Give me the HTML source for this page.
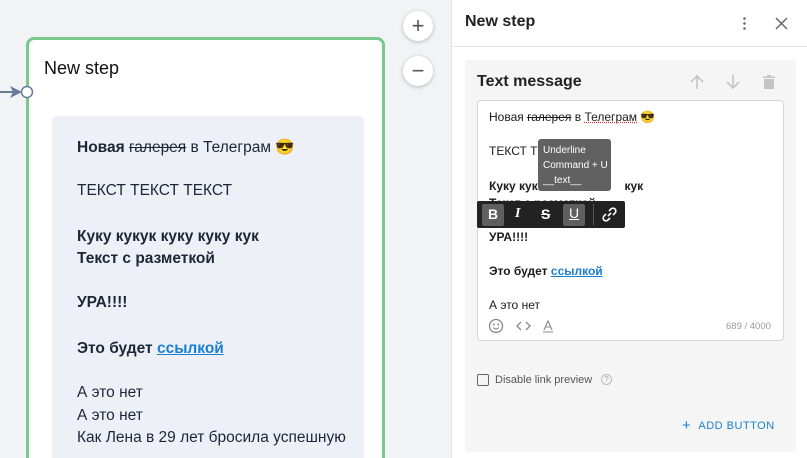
<!DOCTYPE html>
<html><head><meta charset="utf-8"><style>
*{margin:0;padding:0;box-sizing:border-box}
html,body{width:807px;height:458px;overflow:hidden}
body{background:#f2f3f5;font-family:"Liberation Sans",Arial,"Noto Sans CJK SC",sans-serif;position:relative;color:#1f2430}
.a{position:absolute;white-space:nowrap}
.card{position:absolute;left:26px;top:37px;width:359px;height:430px;border:3px solid #78c98b;border-radius:8px;background:#fff}
.inner{position:absolute;left:52px;top:116px;width:312px;height:342px;background:#edf1f7;border-radius:5px 5px 0 0}
.c{font-size:15.5px;color:#1f2633}
.b{font-weight:bold}
.lk{color:#1a7fd0;text-decoration:underline;font-weight:bold}
.zb{position:absolute;width:30px;height:30px;border-radius:50%;background:#fff;box-shadow:0 1px 4px rgba(0,0,0,.25);text-align:center;line-height:29px;font-size:22px;color:#555}
.panel{position:absolute;left:451px;top:0;width:356px;height:458px;background:#fff;border-left:1px solid #e3e3e3}
.e{font-size:12px;color:#1b1b1b}
</style></head><body>
<div class="zb" style="left:403px;top:11px">+</div>
<div class="zb" style="left:403px;top:56px">−</div>
<div class="card"></div>
<div class="a" style="left:44px;top:58px;font-size:18px;color:#111">New step</div>
<svg class="a" style="left:0;top:82px" width="36" height="20"><path d="M0 10H18" stroke="#6b7a96" stroke-width="2"/><path d="M10 4L22 10L10 16L13 10Z" fill="#6b7a96"/><circle cx="27" cy="10" r="5.5" fill="#fff" stroke="#6b7a96" stroke-width="1.5"/></svg>
<div class="inner"></div>
<div class="a c" style="left:77px;top:138px"><span class="b">Новая</span> <s>галерея</s> в Телеграм 😎</div>
<div class="a c" style="left:77px;top:182px">ТЕКСТ ТЕКСТ ТЕКСТ</div>
<div class="a c b" style="left:77px;top:228px">Куку кукук куку куку кук</div>
<div class="a c b" style="left:77px;top:250px">Текст с разметкой</div>
<div class="a c b" style="left:77px;top:294px">УРА!!!!</div>
<div class="a c b" style="left:77px;top:340px">Это будет <span class="lk">ссылкой</span></div>
<div class="a c" style="left:77px;top:384px">А это нет</div>
<div class="a c" style="left:77px;top:407px">А это нет</div>
<div class="a c" style="left:77px;top:429px">Как Лена в 29 лет бросила успешную</div>

<div class="panel">
<div style="height:47px;border-bottom:1px solid #e6e6e6"></div>
<div class="a" style="left:13px;top:13px;font-size:16px;font-weight:bold;color:#222">New step</div>
<div class="a" style="left:291px;top:16px;width:3px;height:15px;background:radial-gradient(circle,#777 1.2px,transparent 1.5px) 0 0/3px 5px"></div>
<svg class="a" style="left:323px;top:17px" width="13" height="13"><path d="M1 1L12 12M12 1L1 12" stroke="#666" stroke-width="1.5"/></svg>
<div class="a" style="left:13px;top:60px;width:331px;height:392px;background:#f5f5f5;border-radius:4px"></div>
<div class="a" style="left:25px;top:73px;font-size:16px;font-weight:bold;color:#222">Text message</div>
<svg class="a" style="left:237px;top:74px" width="110" height="16"><g stroke="#c4c4c4" stroke-width="1.6" fill="none"><path d="M8 15V2M2 8L8 2L14 8"/><path d="M44 1V14M38 8L44 14L50 8"/></g><path d="M74 2.5H86V4H74ZM78 1H82V2.5H78ZM75 5H85V15H75Z" fill="#c4c4c4"/></svg>
<div class="a" style="left:25px;top:100px;width:307px;height:241px;background:#fff;border:1px solid #d6d6d6;border-radius:4px"></div>
<div class="a e" style="left:37px;top:110px">Новая <s>галерея</s> в <span style="text-decoration:underline dotted #d33">Телеграм</span> 😎</div>
<div class="a e" style="left:37px;top:144px">ТЕКСТ Т</div>
<div class="a e b" style="left:37px;top:179px">Куку кук<span style="color:#fff">_____________</span>кук</div>
<div class="a e b" style="left:37px;top:196px">Текст с разметкой</div>
<div class="a e b" style="left:37px;top:230px">УРА!!!!</div>
<div class="a e b" style="left:37px;top:264px">Это будет <span class="lk">ссылкой</span></div>
<div class="a e" style="left:37px;top:298px">А это нет</div>
<div class="a" style="left:86px;top:139px;width:73px;height:52px;background:#616161;border-radius:3px;color:#fff;font-size:10px;line-height:15px;padding:4px 5px">Underline<br>Command + U<br>__text__</div>
<div class="a" style="left:25px;top:201px;width:148px;height:27px;background:#222;border-radius:2px"></div>
<div class="a" style="left:30px;top:204px;width:22px;height:22px;background:#5f5f5f;border-radius:2px"></div>
<div class="a" style="left:111px;top:204px;width:22px;height:22px;background:#5f5f5f;border-radius:2px"></div>
<div class="a" style="left:141px;top:204px;width:1px;height:21px;background:#555"></div>
<div class="a" style="left:36px;top:206px;color:#fff;font-weight:bold;font-size:14px">B</div>
<div class="a" style="left:63px;top:206px;color:#fff;font-weight:bold;font-style:italic;font-size:14px;font-family:'Liberation Serif',serif">I</div>
<div class="a" style="left:89px;top:206px;color:#fff;font-weight:bold;font-size:14px;text-decoration:line-through">S</div>
<div class="a" style="left:117px;top:205px;color:#fff;font-size:14px;text-decoration:underline">U</div>
<svg class="a" style="left:150px;top:207px" width="15" height="15"><g stroke="#fff" stroke-width="1.6" fill="none"><path d="M6 9L9 6"/><path d="M7 4L9 2A2.8 2.8 0 0 1 13 6L11 8"/><path d="M8 11L6 13A2.8 2.8 0 0 1 2 9L4 7"/></g></svg>
<svg class="a" style="left:36px;top:318px" width="70" height="16"><circle cx="8" cy="8" r="6.5" stroke="#888" stroke-width="1.3" fill="none"/><circle cx="5.8" cy="6.5" r="1" fill="#888"/><circle cx="10.2" cy="6.5" r="1" fill="#888"/><path d="M5 9.5Q8 12.5 11 9.5" stroke="#888" stroke-width="1.2" fill="none"/><path d="M33 4L29 8L33 12M38 4L42 8L38 12" stroke="#888" stroke-width="1.3" fill="none"/><path d="M56 12L60 3L64 12M57.5 9H62.5M55 14H65" stroke="#888" stroke-width="1.1" fill="none"/></svg>
<div class="a" style="left:274px;top:321px;font-size:9.5px;color:#999">689 / 4000</div>
<div class="a" style="left:25px;top:374px;width:12px;height:12px;border:1.5px solid #666;border-radius:2px"></div>
<div class="a" style="left:43px;top:374px;font-size:11px;color:#555">Disable link preview</div>
<div class="a" style="left:149px;top:374px;width:11px;height:11px;border:1px solid #bbb;border-radius:50%;font-size:8px;color:#aaa;text-align:center;line-height:10px">?</div>
<div class="a" style="left:230px;top:416px;font-size:11px;color:#1d7fd0;letter-spacing:.5px"><span style="font-size:15px;position:relative;top:1px">+</span>&nbsp;&nbsp;ADD BUTTON</div>
</div>
</body></html>
